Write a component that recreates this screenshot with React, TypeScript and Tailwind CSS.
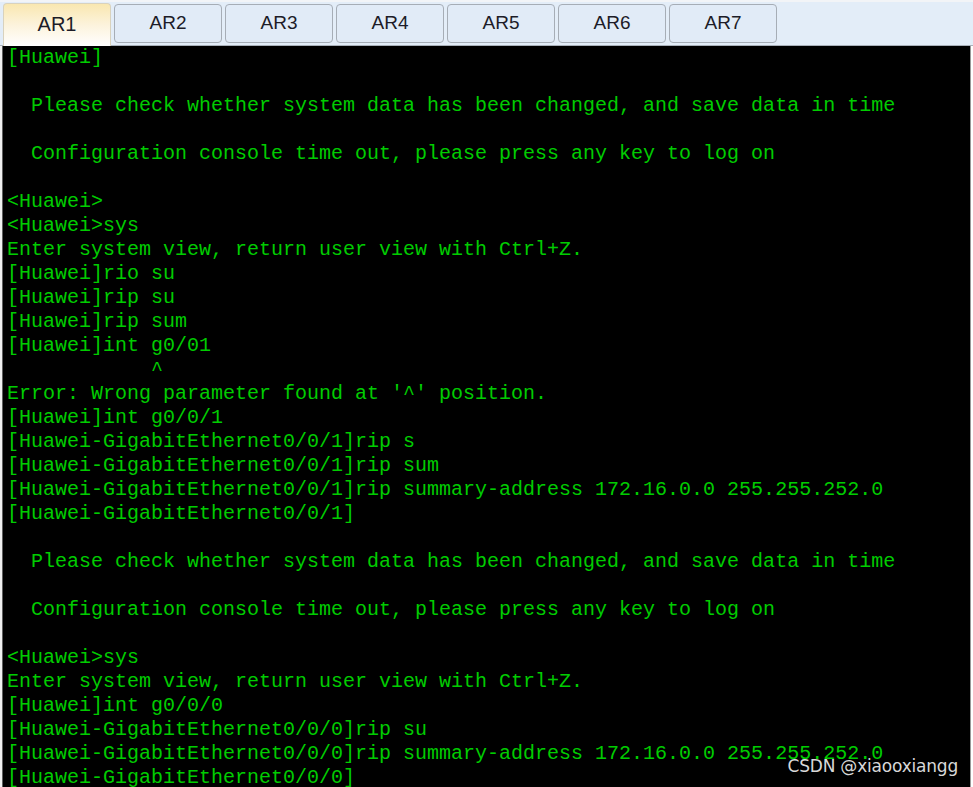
import React from "react";

const tabs = ["AR1", "AR2", "AR3", "AR4", "AR5", "AR6", "AR7"];

const lines = [
  "[Huawei]",
  "",
  "  Please check whether system data has been changed, and save data in time",
  "",
  "  Configuration console time out, please press any key to log on",
  "",
  "<Huawei>",
  "<Huawei>sys",
  "Enter system view, return user view with Ctrl+Z.",
  "[Huawei]rio su",
  "[Huawei]rip su",
  "[Huawei]rip sum",
  "[Huawei]int g0/01",
  "            ^",
  "Error: Wrong parameter found at '^' position.",
  "[Huawei]int g0/0/1",
  "[Huawei-GigabitEthernet0/0/1]rip s",
  "[Huawei-GigabitEthernet0/0/1]rip sum",
  "[Huawei-GigabitEthernet0/0/1]rip summary-address 172.16.0.0 255.255.252.0",
  "[Huawei-GigabitEthernet0/0/1]",
  "",
  "  Please check whether system data has been changed, and save data in time",
  "",
  "  Configuration console time out, please press any key to log on",
  "",
  "<Huawei>sys",
  "Enter system view, return user view with Ctrl+Z.",
  "[Huawei]int g0/0/0",
  "[Huawei-GigabitEthernet0/0/0]rip su",
  "[Huawei-GigabitEthernet0/0/0]rip summary-address 172.16.0.0 255.255.252.0",
  "[Huawei-GigabitEthernet0/0/0]",
];

const App = () => {
  return (
    <div className="relative w-[973px] h-[787px] overflow-hidden bg-white flex flex-col">
      {/* Tab bar */}
      <div className="h-[46px] shrink-0 bg-[#e3edf8] border-t-2 border-[#f2f4f7] border-b border-b-[#a9b1ba] flex items-end pl-[3px] gap-[3px] font-['Liberation_Sans',sans-serif]">
        {tabs.map((t, i) =>
          i === 0 ? (
            <div
              key={t}
              className="w-[108px] h-[43px] -mb-px rounded-t-[4px] border border-b-0 border-[#d9d2bd] bg-gradient-to-b from-[#f9e7b0] via-[#fcf3dc] to-white flex items-center justify-center pb-[2px] text-[20px] text-[#1c1c28]"
            >
              {t}
            </div>
          ) : (
            <div
              key={t}
              className="w-[108px] h-[39px] mb-[2px] rounded-[4px] border border-[#a6adb6] bg-[#e1ebf7] flex items-center justify-center text-[19px] text-[#1c1c28]"
            >
              {t}
            </div>
          )
        )}
      </div>

      {/* Console */}
      <div className="flex-1 flex">
        <div className="w-[3px] bg-[#f0f0f0] border-r border-[#606060]" />
        <div className="flex-1 bg-black overflow-hidden">
          <pre className="pl-[4px] font-['Liberation_Mono','Courier_New',monospace] text-[20px] leading-[24px] text-[#00cc00] whitespace-pre">
            {lines.map((l, i) => (
              <div key={i} className="h-[24px]">
                {l}
              </div>
            ))}
          </pre>
        </div>
        <div className="w-[3px] bg-white border-l border-[#9a9a9a]" />
      </div>

      {/* watermark */}
      <div className="absolute right-[15px] bottom-[8px] text-[17px] text-[#d8d8d8] font-['DejaVu_Sans',sans-serif] tracking-[-0.2px]">
        CSDN @xiaooxiangg
      </div>
    </div>
  );
};

export default App;
